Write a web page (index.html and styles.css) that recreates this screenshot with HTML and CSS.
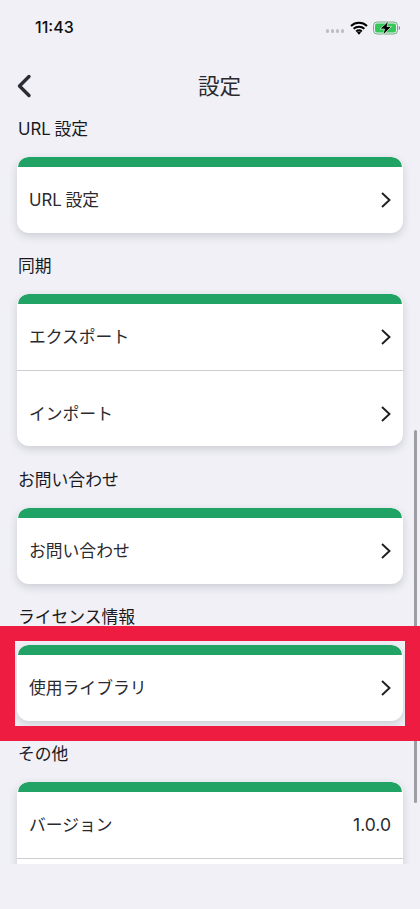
FILE: index.html
```html
<!DOCTYPE html>
<html lang="ja">
<head>
<meta charset="utf-8">
<title>設定</title>
<link rel="stylesheet" href="styles.css">
</head>
<body>
<div class="phone">
  <header class="status">
    <span class="time">11:43</span>
    <div class="status-icons">
      <span class="dots"><i></i><i></i><i></i><i></i></span>
      <svg class="wifi" width="18" height="14" viewBox="0 0 18 14"><path d="M1 5a11.700 11.700 0 0 1 16 0M3.600 7.800a7.900 7.900 0 0 1 10.800 0M6.200 10.400a4.100 4.100 0 0 1 5.600 0" fill="none" stroke="#000" stroke-width="2"/><path d="M7 11.600 9 13.800l2-2.200a2.800 2.800 0 0 0-4 0z" fill="#000"/></svg>
      <svg class="battery" width="28" height="14" viewBox="0 0 28 14"><rect x=".5" y="1" width="24" height="12" rx="3.500" fill="none" stroke="#6fae7c"/><rect x="2" y="2.500" width="21" height="9" rx="2" fill="#34c759"/><path d="M25.800 5v4c.8-.3 1.200-1 1.200-2s-.4-1.700-1.200-2z" fill="#888"/><path d="M15.500 0 7 8h4.500L10 14l8.500-8.500H14z" fill="#000" stroke="#e6f2e8" stroke-width=".7"/></svg>
    </div>
  </header>
  <nav class="navbar">
    <svg class="back" width="16" height="24" viewBox="0 0 16 24"><path d="M13 2.500 3.500 12 13 21.500" fill="none" stroke="#2c2c34" stroke-width="3.400" stroke-linecap="round" stroke-linejoin="round"/></svg>
    <h1 class="title">設定</h1>
  </nav>
  <main class="content">
    <section class="group">
      <h2 class="group-label">URL 設定</h2>
      <div class="card">
        <div class="row"><span>URL 設定</span><svg class="chev" width="12" height="18" viewBox="0 0 12 18"><path d="M2 2l7.500 7L2 16" fill="none" stroke="#1f1f1f" stroke-width="1.900"/></svg></div>
      </div>
    </section>
    <section class="group group-tall">
      <h2 class="group-label">同期</h2>
      <div class="card">
        <div class="row"><span>エクスポート</span><svg class="chev" width="12" height="18" viewBox="0 0 12 18"><path d="M2 2l7.500 7L2 16" fill="none" stroke="#1f1f1f" stroke-width="1.900"/></svg></div>
        <div class="row"><span>インポート</span><svg class="chev" width="12" height="18" viewBox="0 0 12 18"><path d="M2 2l7.500 7L2 16" fill="none" stroke="#1f1f1f" stroke-width="1.900"/></svg></div>
      </div>
    </section>
    <section class="group">
      <h2 class="group-label">お問い合わせ</h2>
      <div class="card">
        <div class="row"><span>お問い合わせ</span><svg class="chev" width="12" height="18" viewBox="0 0 12 18"><path d="M2 2l7.500 7L2 16" fill="none" stroke="#1f1f1f" stroke-width="1.900"/></svg></div>
      </div>
    </section>
    <section class="group">
      <h2 class="group-label">ライセンス情報</h2>
      <div class="card">
        <div class="row"><span>使用ライブラリ</span><svg class="chev" width="12" height="18" viewBox="0 0 12 18"><path d="M2 2l7.500 7L2 16" fill="none" stroke="#1f1f1f" stroke-width="1.900"/></svg></div>
      </div>
    </section>
    <section class="group">
      <h2 class="group-label">その他</h2>
      <div class="card">
        <div class="row"><span>バージョン</span><span class="value">1.0.0</span></div>
        <div class="row"><span>&nbsp;</span></div>
      </div>
    </section>
    <div class="scrollbar"></div>
  </main>
  <div class="highlight"></div>
</div>
</body>
</html>
```
FILE: styles.css
```css
* { box-sizing: border-box; }
html, body { margin: 0; padding: 0; }
body {
  background: #f0f0f6;
  color: #222226;
  font-family: "Inter", "Noto Sans CJK JP", sans-serif;
}
.phone { position: relative; width: 420px; height: 909px; overflow: hidden; }
.status {
  height: 64px;
  padding: 15px 19px 0 35px;
  display: flex;
  justify-content: space-between;
  align-items: flex-start;
}
.time { font-size: 16px; font-weight: 500; line-height: 24px; color: #111; }
.status-icons { display: flex; align-items: center; gap: 6px; height: 24px; margin-top: 1px; }
.dots { display: flex; gap: 1.500px; margin-top: 6px; }
.dots i { width: 3.500px; height: 3.500px; border-radius: 50%; background: #bdbdc2; }
.wifi { margin-right: -1px; }
.navbar {
  position: relative;
  height: 44px;
  padding-left: 19px;
  display: flex;
  align-items: center;
  justify-content: center;
}
.back { position: absolute; left: 16px; top: 10px; }
.title { margin: 0; font-size: 21.500px; font-weight: 400; line-height: 44px; color: #2a2a2e; }
.content { position: relative; height: 756px; overflow: hidden; }
.group { height: 137px; padding: 0 17px; }
.group-tall { height: 214px; }
.group-label {
  margin: 0;
  height: 49px;
  padding: 8.500px 0 0 1px;
  font-size: 16.800px;
  font-weight: 400;
  line-height: 24px;
  word-spacing: -1px;
  color: #1a1a1e;
}
.card {
  background: #fff;
  border-radius: 12px;
  overflow: hidden;
  box-shadow: 0 3px 8px rgba(60, 60, 80, 0.2);
}
.card::before {
  content: "";
  display: block;
  height: 10px;
  margin: 0 1px;
  border-radius: 12px 12px 0 0;
  background: #22a366;
}
.row {
  height: 66px;
  padding: 0 12px;
  display: flex;
  align-items: center;
  justify-content: space-between;
  font-size: 16.800px;
  line-height: 24px;
  word-spacing: -1px;
  color: #2a2a2e;
}
.row + .row { height: 76px; padding-top: 10px; border-top: 1.500px solid #cdcdd1; }
.value { font-size: 17.500px; }
.chev { flex: none; margin-right: -1px; }
.scrollbar {
  position: absolute;
  left: 414px;
  top: 322px;
  width: 3px;
  height: 373px;
  border-radius: 2px;
  background: #9c9ca3;
}
.highlight {
  position: absolute;
  left: 0;
  top: 626px;
  width: 420px;
  height: 115px;
  border: 15px solid #ee1c41;
}
```
